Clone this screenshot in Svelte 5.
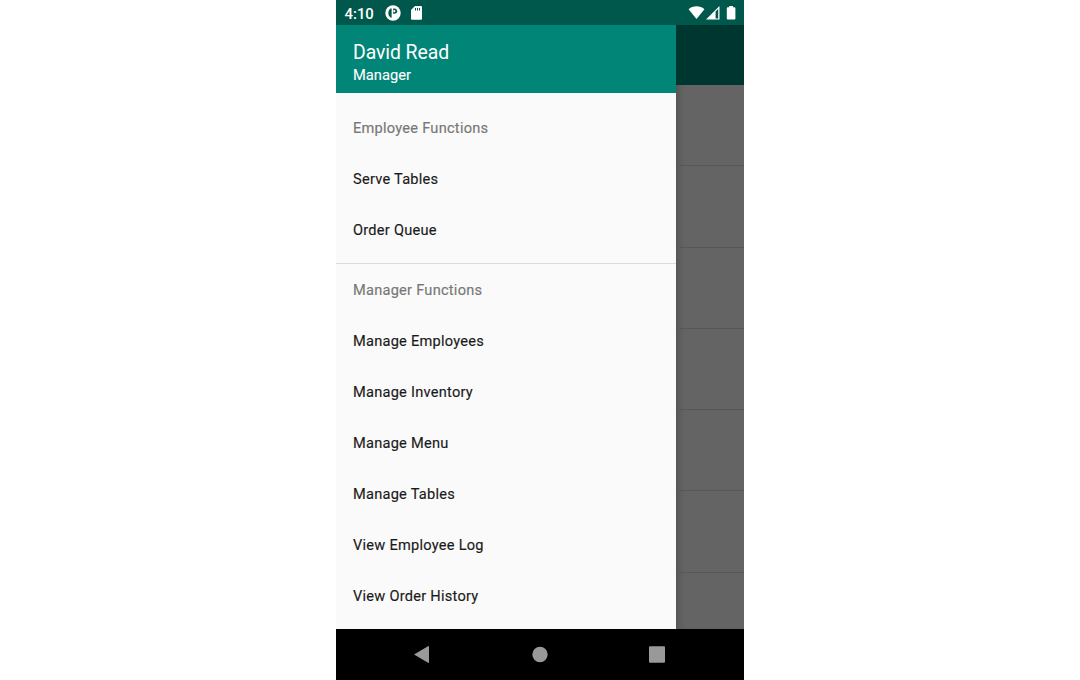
<script>
  const groups = [
    { title: 'Employee Functions', items: ['Serve Tables', 'Order Queue'] },
    {
      title: 'Manager Functions',
      items: ['Manage Employees', 'Manage Inventory', 'Manage Menu', 'Manage Tables', 'View Employee Log', 'View Order History']
    }
  ];
  const rows = [81, 82, 81, 81, 81, 82, 56];
</script>

<div class="page">
  <div class="phone">
    <header class="status">
      <span class="clock">4:10</span>
      <svg class="app-icon" width="16" height="16" viewBox="0 0 16 16">
        <circle cx="8" cy="8" r="7.7" fill="#fff" />
        <path d="M6.6 3.2C2.2 4 2.2 12 6.6 12.8Z" fill="#00574b" />
        <path d="M8.2 3.4h1.2q2.8.4 2.8 2.8t-2.8 2.6H8.2Z" fill="#00574b" />
        <circle cx="9.3" cy="6.2" r="1.1" fill="#fff" />
      </svg>
      <svg class="sd" width="11" height="14" viewBox="0 0 11 14">
        <path d="M4 0h6a1 1 0 0 1 1 1v11.7a1 1 0 0 1-1 1H1a1 1 0 0 1-1-1V4Z" fill="#fff" />
        <path d="M4.5 2v2.5M6.5 2v2.5M8.5 2v2.5" stroke="#00574b" />
      </svg>
      <svg class="signals" width="48" height="16" viewBox="0 0 48 16">
        <path d="M.6 4.2C5 .4 12 .4 16.4 4.2L8.5 14Z" fill="#fff" />
        <path d="M18 14.6 31.5 1v13.6Z" fill="#fff" />
        <path d="M27.6 6.6 30.2 4v9.4h-2.6Z" fill="#00574b" />
        <path d="M41.2 2.2V1H45v1.2h1.4a1 1 0 0 1 1 1v10.4a1 1 0 0 1-1 1h-6.6a1 1 0 0 1-1-1V3.2a1 1 0 0 1 1-1Z" fill="#fff" />
      </svg>
    </header>

    <main>
      <aside>
        <div class="profile">
          <h1>David Read</h1>
          <p>Manager</p>
        </div>
        <nav>
          {#each groups as group}
            <section>
              <h2>{group.title}</h2>
              {#each group.items as item}
                <a href={undefined}>{item}</a>
              {/each}
            </section>
          {/each}
        </nav>
      </aside>
      <div class="content">
        <div class="toolbar"></div>
        {#each rows as height}
          <div class="row" style="height: {height}px"></div>
        {/each}
      </div>
    </main>

    <footer>
      <svg width="408" height="51" viewBox="0 0 408 51" fill="#999">
        <path d="M78 25.5 92 17.2q1-.5 1 .6v15.4q0 1.1-1 .6Z" />
        <circle cx="204" cy="25.5" r="7.7" />
        <rect x="313" y="17.3" width="16" height="16.5" rx="1" />
      </svg>
    </footer>
  </div>
</div>

<style>
  :global(body) {
    background: #fff;
  }
  .page {
    height: 680px;
    display: flex;
    justify-content: center;
    font-family: Roboto, sans-serif;
  }
  .phone {
    width: 408px;
    height: 680px;
    display: flex;
    flex-direction: column;
    overflow: hidden;
  }
  .status {
    height: 25px;
    flex: none;
    box-sizing: border-box;
    padding: 0 8px 0 8.5px;
    display: flex;
    align-items: center;
    background: #00574b;
    color: #fff;
  }
  .clock {
    width: 40.5px;
    font-size: 14.9px;
    font-weight: 500;
    line-height: 25px;
    padding-top: 3px;
  }
  .sd {
    margin-left: 10px;
  }
  .signals {
    margin-left: auto;
  }
  main {
    height: 604px;
    display: flex;
    flex: none;
  }
  aside {
    width: 340px;
    flex: none;
    background: #fafafa;
  }
  .profile {
    height: 68px;
    box-sizing: border-box;
    padding: 16px 17px 0;
    background: #008577;
    color: #fff;
  }
  h1,
  h2,
  p {
    margin: 0;
  }
  h1 {
    font-size: 19.4px;
    font-weight: 400;
    line-height: 24px;
    letter-spacing: -0.07px;
  }
  p {
    font-size: 14.7px;
    line-height: 20px;
    -webkit-text-stroke: 0.1px;
  }
  nav {
    padding-top: 10px;
  }
  section + section {
    border-top: 1px solid #dadada;
    margin-top: 7px;
    padding-top: 1px;
  }
  h2,
  a {
    display: block;
    height: 51px;
    padding-left: 17px;
    font-size: 14.6px;
    line-height: 51px;
    font-weight: 400;
    letter-spacing: 0.25px;
    -webkit-text-stroke: 0.15px;
  }
  h2 {
    color: #777;
  }
  a {
    color: #1a1a1a;
  }
  .content {
    flex: 1;
    background: #646464;
    box-shadow: inset 8px 0 8px -7px rgba(0, 0, 0, 0.25);
  }
  .toolbar {
    height: 60px;
    background: #003630;
  }
  .row {
    box-sizing: border-box;
    border-bottom: 1px solid #575757;
  }
  .row:last-child {
    border: 0;
  }
  footer {
    height: 51px;
    background: #000;
  }
  svg {
    display: block;
    flex: none;
  }
</style>
